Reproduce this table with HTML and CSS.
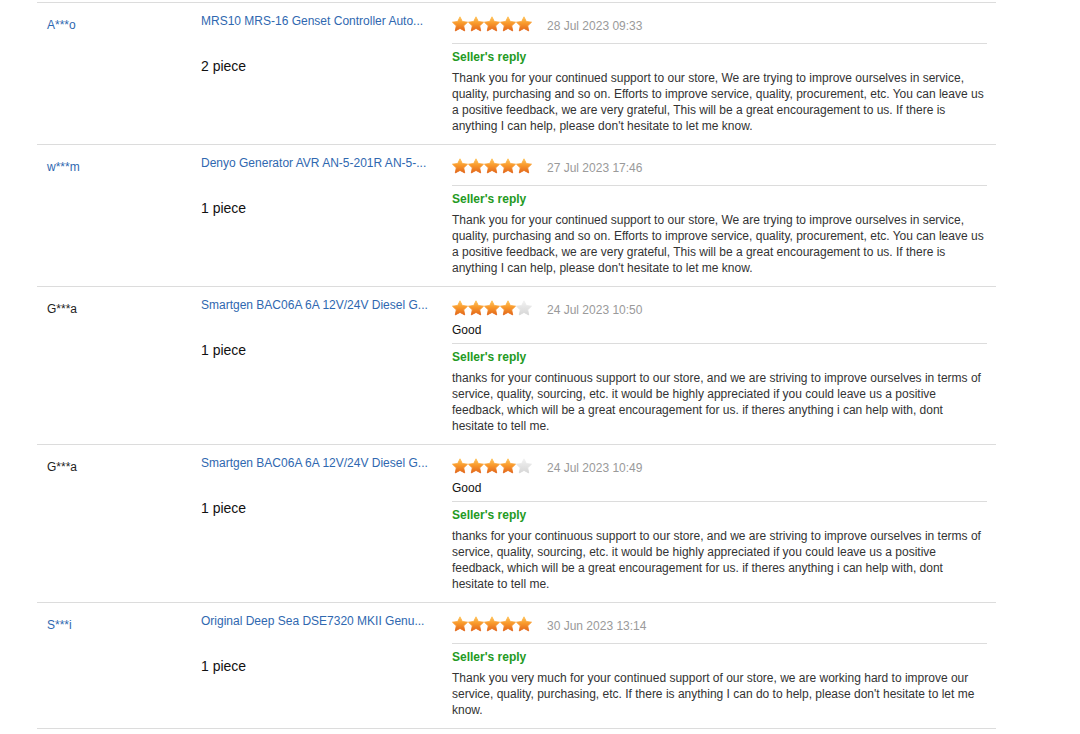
FILE: index.html
```html
<!DOCTYPE html>
<html>
<head>
<meta charset="utf-8">
<link rel="stylesheet" href="styles.css">
</head>
<body>
<svg class="defs" width="0" height="0" aria-hidden="true">
  <defs>
    <linearGradient id="gOn" x1="0" y1="0" x2="0" y2="1">
      <stop offset="0" stop-color="#ffc35a"/>
      <stop offset="0.45" stop-color="#f99a2c"/>
      <stop offset="1" stop-color="#e2661a"/>
    </linearGradient>
    <linearGradient id="gOff" x1="0" y1="0" x2="0" y2="1">
      <stop offset="0" stop-color="#f2f2f2"/>
      <stop offset="1" stop-color="#d6d6d6"/>
    </linearGradient>
    <symbol id="star" viewBox="0 0 16 16">
      <polygon points="8,0.8 10.3,5.5 15.5,6.2 11.7,9.8 12.7,14.9 8,12.4 3.3,14.9 4.3,9.8 0.5,6.2 5.7,5.5" stroke-linejoin="round" stroke-width="0.9"/>
    </symbol>
  </defs>
</svg>

<div class="list">
  <div class="row">
    <div class="buyer link">A***o</div>
    <div class="product">
      <div class="title">MRS10 MRS-16 Genset Controller Auto...</div>
      <div class="qty">2 piece</div>
    </div>
    <div class="review">
      <div class="top">
        <div class="rate">
          <span class="stars">
            <svg class="on"><use href="#star"/></svg><svg class="on"><use href="#star"/></svg><svg class="on"><use href="#star"/></svg><svg class="on"><use href="#star"/></svg><svg class="on"><use href="#star"/></svg>
          </span>
          <span class="date">28 Jul 2023 09:33</span>
        </div>
      </div>
      <div class="reply-title">Seller's reply</div>
      <div class="reply-text">Thank you for your continued support to our store, We are trying to improve ourselves in service, quality, purchasing and so on. Efforts to improve service, quality, procurement, etc. You can leave us a positive feedback, we are very grateful, This will be a great encouragement to us. If there is anything I can help, please don't hesitate to let me know.</div>
    </div>
  </div>

  <div class="row">
    <div class="buyer link">w***m</div>
    <div class="product">
      <div class="title">Denyo Generator AVR AN-5-201R AN-5-...</div>
      <div class="qty">1 piece</div>
    </div>
    <div class="review">
      <div class="top">
        <div class="rate">
          <span class="stars">
            <svg class="on"><use href="#star"/></svg><svg class="on"><use href="#star"/></svg><svg class="on"><use href="#star"/></svg><svg class="on"><use href="#star"/></svg><svg class="on"><use href="#star"/></svg>
          </span>
          <span class="date">27 Jul 2023 17:46</span>
        </div>
      </div>
      <div class="reply-title">Seller's reply</div>
      <div class="reply-text">Thank you for your continued support to our store, We are trying to improve ourselves in service, quality, purchasing and so on. Efforts to improve service, quality, procurement, etc. You can leave us a positive feedback, we are very grateful, This will be a great encouragement to us. If there is anything I can help, please don't hesitate to let me know.</div>
    </div>
  </div>

  <div class="row">
    <div class="buyer">G***a</div>
    <div class="product">
      <div class="title">Smartgen BAC06A 6A 12V/24V Diesel G...</div>
      <div class="qty">1 piece</div>
    </div>
    <div class="review">
      <div class="top">
        <div class="rate">
          <span class="stars">
            <svg class="on"><use href="#star"/></svg><svg class="on"><use href="#star"/></svg><svg class="on"><use href="#star"/></svg><svg class="on"><use href="#star"/></svg><svg class="off"><use href="#star"/></svg>
          </span>
          <span class="date">24 Jul 2023 10:50</span>
        </div>
        <div class="comment">Good</div>
      </div>
      <div class="reply-title">Seller's reply</div>
      <div class="reply-text">thanks for your continuous support to our store, and we are striving to improve ourselves in terms of service, quality, sourcing, etc. it would be highly appreciated if you could leave us a positive feedback, which will be a great encouragement for us. if theres anything i can help with, dont hesitate to tell me.</div>
    </div>
  </div>

  <div class="row">
    <div class="buyer">G***a</div>
    <div class="product">
      <div class="title">Smartgen BAC06A 6A 12V/24V Diesel G...</div>
      <div class="qty">1 piece</div>
    </div>
    <div class="review">
      <div class="top">
        <div class="rate">
          <span class="stars">
            <svg class="on"><use href="#star"/></svg><svg class="on"><use href="#star"/></svg><svg class="on"><use href="#star"/></svg><svg class="on"><use href="#star"/></svg><svg class="off"><use href="#star"/></svg>
          </span>
          <span class="date">24 Jul 2023 10:49</span>
        </div>
        <div class="comment">Good</div>
      </div>
      <div class="reply-title">Seller's reply</div>
      <div class="reply-text">thanks for your continuous support to our store, and we are striving to improve ourselves in terms of service, quality, sourcing, etc. it would be highly appreciated if you could leave us a positive feedback, which will be a great encouragement for us. if theres anything i can help with, dont hesitate to tell me.</div>
    </div>
  </div>

  <div class="row">
    <div class="buyer link">S***i</div>
    <div class="product">
      <div class="title">Original Deep Sea DSE7320 MKII Genu...</div>
      <div class="qty">1 piece</div>
    </div>
    <div class="review">
      <div class="top">
        <div class="rate">
          <span class="stars">
            <svg class="on"><use href="#star"/></svg><svg class="on"><use href="#star"/></svg><svg class="on"><use href="#star"/></svg><svg class="on"><use href="#star"/></svg><svg class="on"><use href="#star"/></svg>
          </span>
          <span class="date">30 Jun 2023 13:14</span>
        </div>
      </div>
      <div class="reply-title">Seller's reply</div>
      <div class="reply-text">Thank you very much for your continued support of our store, we are working hard to improve our service, quality, purchasing, etc. If there is anything I can do to help, please don't hesitate to let me know.</div>
    </div>
  </div>
</div>
</body>
</html>
```

FILE: styles.css
```css
html, body {
  margin: 0;
  padding: 0;
  background: #fff;
}

body {
  font-family: "Liberation Sans", Arial, sans-serif;
  font-size: 12px;
  color: #333;
}

.defs {
  position: absolute;
  width: 0;
  height: 0;
  overflow: hidden;
}

.list {
  width: 959px;
  margin: 2px 0 0 37px;
  border-bottom: 1px solid #dcdcdc;
}

.row {
  display: grid;
  grid-template-columns: 164px 251px 1fr;
  border-top: 1px solid #dcdcdc;
}

.buyer {
  padding: 14px 0 0 10px;
  line-height: 16px;
  color: #222;
}

.link {
  color: #2f68b0;
}

.product {
  padding-top: 10px;
}

.title {
  line-height: 16px;
  color: #2f68b0;
  white-space: nowrap;
}

.qty {
  margin-top: 28px;
  font-size: 14px;
  line-height: 18px;
  color: #111;
}

.review {
  padding: 11px 9px 10px 0;
}

.top {
  padding-bottom: 5px;
  border-bottom: 1px solid #dcdcdc;
}

.rate {
  display: flex;
  align-items: center;
  height: 20px;
  margin-bottom: 4px;
}

.stars {
  display: flex;
  width: 80px;
}

.stars svg {
  width: 16px;
  height: 16px;
  display: block;
}

.stars .on {
  fill: url(#gOn);
  stroke: url(#gOn);
}

.stars .off {
  fill: url(#gOff);
  stroke: url(#gOff);
}

.date {
  margin-left: 15px;
  color: #9a9a9a;
  line-height: 16px;
  padding-top: 3px;
}

.comment {
  margin-top: 1px;
  line-height: 16px;
  color: #111;
}

.reply-title {
  margin-top: 5px;
  line-height: 16px;
  font-weight: bold;
  color: #239a23;
}

.reply-text {
  margin-top: 5px;
  line-height: 16px;
  color: #333;
}
```
